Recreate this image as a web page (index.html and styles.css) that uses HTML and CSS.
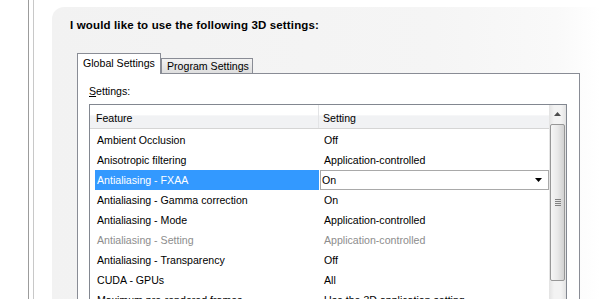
FILE: index.html
```html
<!DOCTYPE html>
<html lang="en">
<head>
    <meta charset="UTF-8">
    <title>Manage 3D Settings</title>
    <link rel="stylesheet" href="styles.css">
</head>
<body>
    <div class="frame">
        <div class="frame-inner">
            <div class="panel">
                <h1 class="title">I would like to use the following 3D settings:</h1>

                <div class="tabs">
                    <div class="tab-strip">
                        <div class="tab active">Global Settings</div>
                        <div class="tab">Program Settings</div>
                    </div>
                    <div class="tab-page">
                        <div class="field-label"><u>S</u>ettings:</div>

                        <div class="listview">
                            <div class="lv-main">
                                <div class="lv-header">
                                    <div class="col-feature">Feature</div>
                                    <div class="col-setting">Setting</div>
                                </div>
                                <div class="lv-body">
                                    <div class="lv-row">
                                        <div class="cell-feature">Ambient Occlusion</div>
                                        <div class="cell-setting">Off</div>
                                    </div>
                                    <div class="lv-row">
                                        <div class="cell-feature">Anisotropic filtering</div>
                                        <div class="cell-setting">Application-controlled</div>
                                    </div>
                                    <div class="lv-row selected">
                                        <div class="cell-feature">Antialiasing - FXAA</div>
                                        <div class="cell-setting">
                                            <div class="dropdown">
                                                <span>On</span>
                                                <svg class="dropdown-arrow" width="7" height="4" viewBox="0 0 7 4"><path d="M0 0H7L3.5 4Z" fill="#000"/></svg>
                                            </div>
                                        </div>
                                    </div>
                                    <div class="lv-row">
                                        <div class="cell-feature">Antialiasing - Gamma correction</div>
                                        <div class="cell-setting">On</div>
                                    </div>
                                    <div class="lv-row">
                                        <div class="cell-feature">Antialiasing - Mode</div>
                                        <div class="cell-setting">Application-controlled</div>
                                    </div>
                                    <div class="lv-row disabled">
                                        <div class="cell-feature">Antialiasing - Setting</div>
                                        <div class="cell-setting">Application-controlled</div>
                                    </div>
                                    <div class="lv-row">
                                        <div class="cell-feature">Antialiasing - Transparency</div>
                                        <div class="cell-setting">Off</div>
                                    </div>
                                    <div class="lv-row">
                                        <div class="cell-feature">CUDA - GPUs</div>
                                        <div class="cell-setting">All</div>
                                    </div>
                                    <div class="lv-row">
                                        <div class="cell-feature">Maximum pre-rendered frames</div>
                                        <div class="cell-setting">Use the 3D application setting</div>
                                    </div>
                                </div>
                            </div>

                            <div class="scrollbar">
                                <div class="scroll-btn">
                                    <svg width="7" height="4" viewBox="0 0 7 4"><path d="M3.5 0L7 4H0Z" fill="#4d4d4d"/></svg>
                                </div>
                                <div class="scroll-thumb">
                                    <div class="grip"><i></i><i></i><i></i><i></i></div>
                                </div>
                            </div>
                        </div>
                    </div>
                </div>
            </div>
        </div>
    </div>
</body>
</html>
```

FILE: styles.css
```css
body {
    margin: 0;
    height: 299px;
    overflow: hidden;
    background: #fff;
    font-family: "Liberation Sans", Arial, sans-serif;
    font-size: 10.6px;
    color: #000;
}
.frame {
    margin-left: 28px;
    height: 299px;
    border-left: 1px solid #9c9c9c;
    padding-left: 4px;
}
.frame-inner {
    height: 100%;
    border-left: 1px solid #c8c8c8;
    padding-left: 18px;
    display: flex;
    flex-direction: column;
}
.panel {
    margin-top: 7px;
    flex: 1;
    border-top-left-radius: 12px;
    background: linear-gradient(to right, #f2f2f2 0%, #f5f5f5 70%, #f9f9f9 92%, #fff 100%);
    padding: 12px 0 0 18px;
}
.title {
    margin: 0;
    font-size: 11.5px;
    letter-spacing: 0.15px;
    font-weight: bold;
    line-height: 13px;
}
.tabs {
    margin: 21px 0 0 7px;
    width: 503px;
}
.tab-strip {
    display: flex;
    align-items: flex-end;
    height: 20px;
    position: relative;
    z-index: 1;
}
.tab {
    box-sizing: border-box;
    height: 15px;
    width: 92px;
    border: 1px solid #898c95;
    border-bottom: none;
    background: linear-gradient(#f3f3f3, #dedede);
    padding: 1px 0 0 5px;
    line-height: 13px;
}
.tab.active {
    height: 21px;
    width: 84px;
    margin-bottom: -1px;
    background: #fff;
    padding: 3px 0 0 5px;
}
.tab-page {
    border: 1px solid #898c95;
    background: #fff;
    height: 260px;
    padding: 11px 0 0 11px;
}
.field-label {
    line-height: 13px;
    margin-bottom: 6px;
}
.listview {
    box-sizing: border-box;
    width: 478px;
    height: 210px;
    border: 1px solid #828790;
    display: flex;
}
.lv-main {
    flex: 1;
}
.lv-header {
    display: flex;
    height: 23px;
    overflow: hidden;
    border-bottom: 1px solid #d5d5d5;
    background: linear-gradient(#fff 0%, #fff 45%, #f1f2f4 46%, #f1f2f4 100%);
    line-height: 26px;
}
.col-feature {
    box-sizing: border-box;
    width: 229px;
    padding-left: 6px;
    border-right: 1px solid #e3e4e6;
}
.col-setting {
    padding-left: 4px;
}
.lv-body {
    padding: 1px 0 0 5px;
}
.lv-row {
    display: flex;
    height: 20px;
    line-height: 20px;
}
.cell-feature {
    width: 224px;
    padding-left: 2px;
    box-sizing: border-box;
}
.cell-setting {
    flex: 1;
    padding-left: 5px;
}
.lv-row.selected .cell-feature {
    background: #3399ff;
    color: #fff;
}
.lv-row.selected .cell-setting {
    padding-left: 1px;
}
.lv-row.disabled {
    color: #8d8d8d;
}
.dropdown {
    box-sizing: border-box;
    height: 20px;
    border: 1px solid #a9a9a9;
    background: #fff;
    padding-left: 1px;
    line-height: 18px;
    display: flex;
    justify-content: space-between;
    align-items: center;
}
.dropdown-arrow {
    margin-right: 6px;
}
.scrollbar {
    width: 17px;
    background: linear-gradient(to right, #e3e3e3, #f3f3f3 30%, #f3f3f3 70%, #e3e3e3);
    display: flex;
    flex-direction: column;
    align-items: center;
}
.scroll-btn {
    height: 18px;
    width: 17px;
    display: flex;
    align-items: center;
    justify-content: center;
}
.scroll-thumb {
    box-sizing: border-box;
    width: 15px;
    height: 157px;
    margin-top: 1px;
    border: 1px solid #979797;
    border-radius: 2px;
    background: linear-gradient(to right, #f6f6f6, #e9e9e9 50%, #d2d2d2);
    display: flex;
    align-items: center;
    justify-content: center;
}
.grip {
    display: flex;
    flex-direction: column;
    gap: 1px;
}
.grip i {
    display: block;
    width: 6px;
    height: 1px;
    background: #828282;
}
```
